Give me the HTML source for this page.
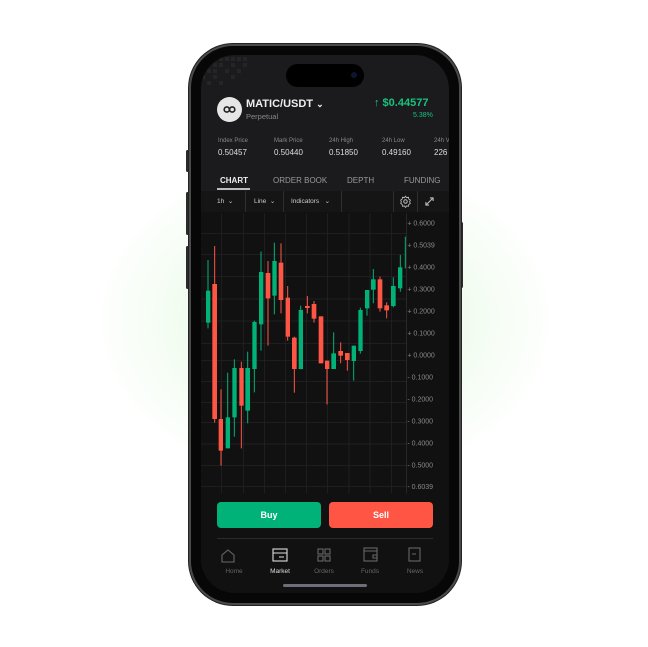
<!DOCTYPE html>
<html><head><meta charset="utf-8"><style>
*{margin:0;padding:0;box-sizing:border-box}
body{width:648px;height:647px;overflow:hidden;background:#fff;font-family:"Liberation Sans",sans-serif;position:relative}
.glow{position:absolute;left:90px;top:150px;width:470px;height:340px;border-radius:50%;background:radial-gradient(ellipse at center,rgba(130,230,120,0.32) 0%,rgba(170,240,160,0.15) 45%,rgba(255,255,255,0) 70%)}
.btn{position:absolute;background:#2a2a2a;border-radius:2px}
.frame{position:absolute;left:189px;top:44px;width:272px;height:561px;border-radius:44px;background:#070707;border:2px solid #4a4a4a;box-shadow:0 0 0 1px #222}
.screen{position:absolute;left:201px;top:55px;width:248px;height:538px;border-radius:34px;background:#1b1b1d;overflow:hidden}
.abs{position:absolute}
.t{position:absolute;white-space:nowrap}
</style></head><body>
<div class="glow"></div>
<div class="btn" style="left:186px;top:150px;width:3px;height:22px"></div>
<div class="btn" style="left:186px;top:192px;width:3px;height:43px"></div>
<div class="btn" style="left:186px;top:246px;width:3px;height:43px"></div>
<div class="btn" style="left:460px;top:222px;width:3px;height:66px"></div>
<div class="frame"></div>
<div class="screen">
  <svg class="abs" style="left:0;top:0" width="60" height="50">
    <g fill="#252528">
    <rect x="18" y="2" width="4" height="4"/><rect x="24" y="2" width="4" height="4"/><rect x="30" y="2" width="4" height="4"/><rect x="36" y="2" width="4" height="4"/><rect x="42" y="2" width="4" height="4"/>
    <rect x="12" y="8" width="4" height="4"/><rect x="18" y="8" width="4" height="4"/><rect x="30" y="8" width="4" height="4"/><rect x="42" y="8" width="4" height="4"/>
    <rect x="6" y="14" width="4" height="4"/><rect x="12" y="14" width="4" height="4"/><rect x="24" y="14" width="4" height="4"/><rect x="36" y="14" width="4" height="4"/>
    <rect x="0" y="20" width="4" height="4"/><rect x="12" y="20" width="4" height="4"/><rect x="30" y="20" width="4" height="4"/>
    <rect x="6" y="26" width="4" height="4"/><rect x="18" y="26" width="4" height="4"/></g>
  </svg>
  <div class="abs" style="left:85px;top:9px;width:78px;height:23px;border-radius:12px;background:#000"></div>
  <div class="abs" style="left:150px;top:17px;width:6px;height:6px;border-radius:50%;background:#0d1530"></div>
  <div class="abs" style="left:16px;top:42px;width:25px;height:25px;border-radius:50%;background:#e6e6e6"></div>
  <svg class="abs" style="left:20px;top:46px" width="17" height="17" viewBox="0 0 17 17"><circle cx="5.8" cy="8.5" r="2.6" stroke="#222" stroke-width="1.6" fill="none"/><circle cx="11.2" cy="8.5" r="2.6" stroke="#222" stroke-width="1.6" fill="none"/></svg>
  <div class="t" style="left:45px;top:43px;font-size:11px;font-weight:bold;color:#eee">MATIC/USDT <span style="font-size:9px">⌄</span></div>
  <div class="t" style="left:45px;top:57px;font-size:7.5px;color:#888">Perpetual</div>
  <div class="t" style="left:173px;top:42px;font-size:11px;font-weight:bold;color:#17c27f">↑ $0.44577</div>
  <div class="t" style="left:212px;top:57px;font-size:7px;color:#17c27f">5.38%</div>
  <div class="t" style="left:17px;top:83px;font-size:6px;color:#888">Index Price</div>
  <div class="t" style="left:17px;top:93px;font-size:8px;color:#ddd">0.50457</div>
  <div class="t" style="left:73px;top:83px;font-size:6px;color:#888">Mark Price</div>
  <div class="t" style="left:73px;top:93px;font-size:8px;color:#ddd">0.50440</div>
  <div class="t" style="left:128px;top:83px;font-size:6px;color:#888">24h High</div>
  <div class="t" style="left:128px;top:93px;font-size:8px;color:#ddd">0.51850</div>
  <div class="t" style="left:181px;top:83px;font-size:6px;color:#888">24h Low</div>
  <div class="t" style="left:181px;top:93px;font-size:8px;color:#ddd">0.49160</div>
  <div class="t" style="left:233px;top:83px;font-size:6px;color:#888">24h V</div>
  <div class="t" style="left:233px;top:93px;font-size:8px;color:#ddd">226</div>
  <div class="t" style="left:19px;top:121px;font-size:8px;color:#eee;font-weight:bold">CHART</div>
  <div class="abs" style="left:16px;top:133px;width:33px;height:1.5px;background:#bbb"></div>
  <div class="t" style="left:72px;top:121px;font-size:8px;color:#999">ORDER BOOK</div>
  <div class="t" style="left:146px;top:121px;font-size:8px;color:#999">DEPTH</div>
  <div class="t" style="left:203px;top:121px;font-size:8px;color:#999">FUNDING</div>
  <div class="abs" style="left:0;top:136px;width:248px;height:21px;background:#151516"></div>
  <div class="abs" style="left:44px;top:136px;width:1px;height:21px;background:#2e2e30"></div>
  <div class="abs" style="left:82px;top:136px;width:1px;height:21px;background:#2e2e30"></div>
  <div class="abs" style="left:140px;top:136px;width:1px;height:21px;background:#2e2e30"></div>
  <div class="abs" style="left:192px;top:136px;width:1px;height:21px;background:#2e2e30"></div>
  <div class="abs" style="left:216px;top:136px;width:1px;height:21px;background:#2e2e30"></div>
  <div class="t" style="left:16px;top:142px;font-size:6.5px;color:#ccc">1h &nbsp;⌄</div>
  <div class="t" style="left:53px;top:142px;font-size:6.5px;color:#ccc">Line &nbsp;⌄</div>
  <div class="t" style="left:90px;top:142px;font-size:6.5px;color:#ccc">Indicators &nbsp; ⌄</div>
  <svg class="abs" style="left:198px;top:140px" width="13" height="13" viewBox="0 0 24 24"><circle cx="12" cy="12" r="3.2" stroke="#bbb" stroke-width="1.8" fill="none"/><path d="M12 2l2 3 3.5-1 .5 3.5 3 2-1.5 3 1.5 3-3 2-.5 3.5-3.5-1-2 3-2-3-3.5 1-.5-3.5-3-2 1.5-3-1.5-3 3-2 .5-3.5 3.5 1z" stroke="#bbb" stroke-width="1.6" fill="none" stroke-linejoin="round"/></svg>
  <svg class="abs" style="left:224px;top:142px" width="9" height="9" viewBox="0 0 10 10"><path d="M1 9L9 1M5.5 1H9V4.5M1 5.5V9H4.5" stroke="#bbb" stroke-width="1.2" fill="none"/></svg>
  <div class="abs" style="left:0;top:157px;width:248px;height:283px;background:#111112"></div>
  <div class="abs" style="left:0;top:440px;width:248px;height:98px;background:#111112"></div>
  <div class="abs" style="left:16px;top:447px;width:104px;height:26px;border-radius:4px;background:#00b277;color:#fff;font-weight:bold;font-size:9px;text-align:center;line-height:26px">Buy</div>
  <div class="abs" style="left:128px;top:447px;width:104px;height:26px;border-radius:4px;background:#ff5545;color:#fff;font-weight:bold;font-size:9px;text-align:center;line-height:26px">Sell</div>
  <div class="abs" style="left:16px;top:483px;width:216px;height:1px;background:#2b2b2e"></div>
  <svg class="abs" style="left:0;top:490px" width="248" height="48">
    <g fill="none" stroke="#666" stroke-width="1.1">
      <path d="M27 5l6 5v7h-12v-7z"/>
      <rect x="72" y="4" width="14" height="12" stroke="#ddd"/><path d="M72 8h14M78 12h5" stroke="#ddd"/>
      <rect x="117" y="4" width="5" height="5"/><rect x="124" y="4" width="5" height="5"/><rect x="117" y="11" width="5" height="5"/><rect x="124" y="11" width="5" height="5"/>
      <rect x="163" y="3" width="13" height="13"/><path d="M163 6h13M172 10h4v3h-4z"/>
      <rect x="208" y="3" width="11" height="13"/><path d="M211 9h4"/>
    </g>
    <text x="33" y="28" font-size="6.5" fill="#666" text-anchor="middle" font-family="Liberation Sans">Home</text>
    <text x="79" y="28" font-size="6.5" fill="#ddd" text-anchor="middle" font-family="Liberation Sans">Market</text>
    <text x="123" y="28" font-size="6.5" fill="#666" text-anchor="middle" font-family="Liberation Sans">Orders</text>
    <text x="169" y="28" font-size="6.5" fill="#666" text-anchor="middle" font-family="Liberation Sans">Funds</text>
    <text x="214" y="28" font-size="6.5" fill="#666" text-anchor="middle" font-family="Liberation Sans">News</text>
  </svg>
  <div class="abs" style="left:82px;top:529px;width:84px;height:3px;border-radius:2px;background:#6e6e78"></div>
</div>
<svg class="abs" style="position:absolute;left:190px;top:200px" width="270" height="300" viewBox="0 0 810 900">
  <g stroke="#262628" stroke-width="2">
    <path d="M95 40V880M160 40V880M223 40V880M287 40V880M350 40V880M413 40V880M477 40V880M540 40V880M605 40V880"/>
    <path d="M33 100H650M33 163H650M33 230H650M33 297H650M33 363H650M33 430H650M33 482H650M33 545H650M33 607H650M33 668H650M33 732H650M33 797H650M33 860H650"/>
  </g>
  <path d="M650 40V880" stroke="#333" stroke-width="2"/>
  <g font-family="Liberation Sans" font-size="21" fill="#888">
    <text x="652" y="77">+ 0.6000</text><text x="652" y="142">+ 0.5039</text><text x="652" y="209">+ 0.4000</text><text x="652" y="275">+ 0.3000</text><text x="652" y="340">+ 0.2000</text><text x="652" y="406">+ 0.1000</text><text x="652" y="472">+ 0.0000</text><text x="652" y="538">- 0.1000</text><text x="652" y="604">- 0.2000</text><text x="652" y="670">- 0.3000</text><text x="652" y="736">- 0.4000</text><text x="652" y="802">- 0.5000</text><text x="652" y="867">- 0.6039</text>
  </g>
  <g stroke-width="3">
  <path stroke="#00b277" d="M54 180V385"/><rect fill="#00b277" x="48" y="272" width="13" height="96"/>
  <path stroke="#ff5545" d="M74 138V668"/><rect fill="#ff5545" x="67" y="252" width="14" height="405"/>
  <path stroke="#ff5545" d="M93 568V797"/><rect fill="#ff5545" x="86" y="657" width="13" height="95"/>
  <path stroke="#00b277" d="M113 518V745"/><rect fill="#00b277" x="107" y="652" width="13" height="93"/>
  <path stroke="#00b277" d="M133 478V710"/><rect fill="#00b277" x="127" y="504" width="13" height="148"/>
  <path stroke="#ff5545" d="M154 485V745"/><rect fill="#ff5545" x="148" y="504" width="13" height="113"/>
  <path stroke="#00b277" d="M173 455V670"/><rect fill="#00b277" x="166" y="504" width="14" height="128"/>
  <path stroke="#00b277" d="M193 362V577"/><rect fill="#00b277" x="187" y="366" width="13" height="141"/>
  <path stroke="#00b277" d="M213 155V452"/><rect fill="#00b277" x="207" y="216" width="13" height="157"/>
  <path stroke="#ff5545" d="M234 183V437"/><rect fill="#ff5545" x="227" y="219" width="14" height="76"/>
  <path stroke="#00b277" d="M253 128V343"/><rect fill="#00b277" x="247" y="183" width="13" height="104"/>
  <path stroke="#ff5545" d="M273 130V340"/><rect fill="#ff5545" x="266" y="188" width="14" height="112"/>
  <path stroke="#ff5545" d="M293 258V422"/><rect fill="#ff5545" x="287" y="293" width="13" height="117"/>
  <path stroke="#ff5545" d="M313 410V578"/><rect fill="#ff5545" x="306" y="413" width="14" height="94"/>
  <path stroke="#00b277" d="M332 317V508"/><rect fill="#00b277" x="326" y="330" width="13" height="177"/>
  <path stroke="#ff5545" d="M352 288V340"/><rect fill="#ff5545" x="345" y="318" width="14" height="6"/>
  <path stroke="#ff5545" d="M372 303V368"/><rect fill="#ff5545" x="365" y="312" width="14" height="44"/>
  <path stroke="#ff5545" d="M393 349V490"/><rect fill="#ff5545" x="386" y="349" width="14" height="141"/>
  <path stroke="#ff5545" d="M411 482V613"/><rect fill="#ff5545" x="405" y="482" width="13" height="25"/>
  <path stroke="#00b277" d="M431 397V507"/><rect fill="#00b277" x="424" y="460" width="14" height="47"/>
  <path stroke="#ff5545" d="M452 427V490"/><rect fill="#ff5545" x="445" y="453" width="14" height="14"/>
  <path stroke="#ff5545" d="M472 459V512"/><rect fill="#ff5545" x="465" y="459" width="14" height="21"/>
  <path stroke="#00b277" d="M491 437V542"/><rect fill="#00b277" x="485" y="437" width="13" height="46"/>
  <path stroke="#00b277" d="M511 323V461"/><rect fill="#00b277" x="505" y="330" width="13" height="123"/>
  <path stroke="#00b277" d="M531 270V347"/><rect fill="#00b277" x="525" y="270" width="13" height="55"/>
  <path stroke="#00b277" d="M550 207V310"/><rect fill="#00b277" x="543" y="238" width="14" height="31"/>
  <path stroke="#ff5545" d="M570 230V335"/><rect fill="#ff5545" x="563" y="238" width="14" height="87"/>
  <path stroke="#ff5545" d="M590 307V355"/><rect fill="#ff5545" x="583" y="316" width="14" height="15"/>
  <path stroke="#00b277" d="M610 232V322"/><rect fill="#00b277" x="603" y="258" width="14" height="60"/>
  <path stroke="#00b277" d="M631 165V275"/><rect fill="#00b277" x="624" y="202" width="13" height="63"/>
  <path stroke="#00b277" d="M646 110V205"/>
  </g>
</svg>
</body></html>
